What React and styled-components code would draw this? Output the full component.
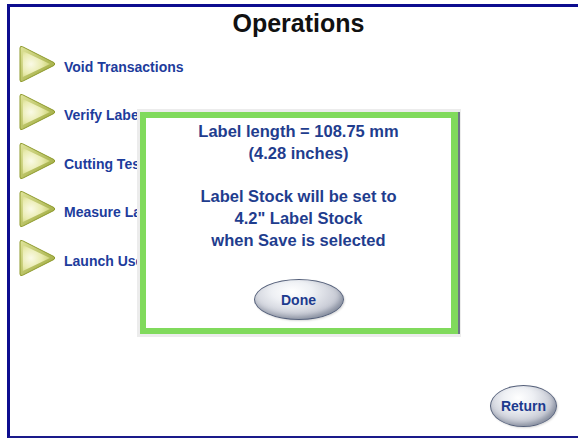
import React from "react";
import styled, { createGlobalStyle } from "styled-components";

const Global = createGlobalStyle`
  html, body { margin: 0; padding: 0; background: #ffffff; }
  body { font-family: "Liberation Sans", Arial, sans-serif; overflow: hidden; }
`;

const Page = styled.div`
  width: 578px;
  height: 439px;
  padding: 4px 0 0 7px;
  box-sizing: border-box;
  background: #ffffff;
  overflow: hidden;
`;

const Frame = styled.div`
  position: relative;
  box-sizing: border-box;
  width: 600px;
  height: 434px;
  border-top: 3px solid #0d0d8f;
  border-left: 3px solid #0d0d8f;
  border-bottom: 2px solid #1a1a8a;
  display: flex;
  flex-direction: column;
  padding: 0 50px 9px 8px;
  background: #ffffff;
`;

const Title = styled.h1`
  margin: 1px 0 0 22px;
  font-size: 25px;
  line-height: 30px;
  font-weight: 700;
  color: #111111;
  text-align: center;
`;

const Menu = styled.ul`
  list-style: none;
  margin: 7px 0 0 0;
  padding: 0;
  display: flex;
  flex-direction: column;
  gap: 11.5px;
`;

const Item = styled.li`
  display: flex;
  align-items: center;
  gap: 8px;
  height: 37px;
`;

const ItemText = styled.span`
  font-size: 14px;
  font-weight: 700;
  color: #1d3c9c;
  margin-top: 6px;
  white-space: nowrap;
`;

const ArrowSvg = styled.svg`
  width: 38px;
  height: 38px;
  flex: none;
`;

const Arrow = () => (
  <ArrowSvg viewBox="0 0 38 38">
    <defs>
      <linearGradient id="ao" x1="0" y1="0" x2="1" y2="1">
        <stop offset="0" stopColor="#dfe39a" />
        <stop offset="1" stopColor="#97a334" />
      </linearGradient>
      <radialGradient id="ai" cx="0.3" cy="0.5" r="0.8">
        <stop offset="0" stopColor="#fafae6" />
        <stop offset="0.5" stopColor="#e9ebb0" />
        <stop offset="1" stopColor="#c2ca62" />
      </radialGradient>
    </defs>
    <path d="M2 3 Q2 0.5 4.5 1.7 L36 17.6 Q37.5 19 36 20.4 L4.5 36.3 Q2 37.5 2 35 Z" fill="url(#ao)" stroke="#8e9a2c" strokeWidth="1" />
    <path d="M4.8 6 L32 19 L4.8 32 Z" fill="url(#ai)" />
  </ArrowSvg>
);

const Footer = styled.div`
  margin-top: auto;
  display: flex;
  justify-content: flex-end;
`;

const Pill = styled.button`
  width: ${(p) => p.$w}px;
  height: ${(p) => p.$h}px;
  border-radius: 50%;
  border: 1.5px solid #55607a;
  background: radial-gradient(ellipse at 42% 30%, #ffffff 0%, #eef0f4 28%, #c9ccd6 62%, #8f96a8 92%, #6c7488 100%);
  box-shadow: inset -2px -3px 5px rgba(70, 80, 100, 0.35), 1px 1px 2px rgba(0,0,0,0.15);
  font-family: "Liberation Sans", Arial, sans-serif;
  font-size: 14px;
  font-weight: 700;
  color: #1d3a8e;
  padding: 0;
  cursor: pointer;
`;

const Dialog = styled.div`
  position: absolute;
  z-index: 1;
  left: 130px;
  top: 105px;
  width: 318px;
  height: 222px;
  box-sizing: border-box;
  border: 6px solid #80da5c;
  border-right-width: 7px;
  background: #ffffff;
  box-shadow: 2px 0 0 #6e7686, 0 0 0 3px #ececec;
  display: flex;
  flex-direction: column;
  align-items: center;
  padding-top: 3px;
`;

const Message = styled.p`
  margin: 0;
  font-size: 16.5px;
  line-height: 21.8px;
  font-weight: 700;
  color: #1f3d8e;
  text-align: center;
`;

const DialogActions = styled.div`
  margin-top: auto;
  margin-bottom: 8px;
  display: flex;
  justify-content: center;
`;

const items = [
  "Void Transactions",
  "Verify Label Stock",
  "Cutting Test",
  "Measure Label Length",
  "Launch User Interface",
];

export default function App() {
  return (
    <>
      <Global />
      <Page>
        <Frame>
          <Title>Operations</Title>
          <Menu>
            {items.map((t) => (
              <Item key={t}>
                <Arrow />
                <ItemText>{t}</ItemText>
              </Item>
            ))}
          </Menu>
          <Footer>
            <Pill $w={67} $h={42}>Return</Pill>
          </Footer>
          <Dialog>
            <Message>
              Label length = 108.75 mm
              <br />
              (4.28 inches)
              <br />
              <br />
              Label Stock will be set to
              <br />
              4.2" Label Stock
              <br />
              when Save is selected
            </Message>
            <DialogActions>
              <Pill $w={90} $h={41}>Done</Pill>
            </DialogActions>
          </Dialog>
        </Frame>
      </Page>
    </>
  );
}
